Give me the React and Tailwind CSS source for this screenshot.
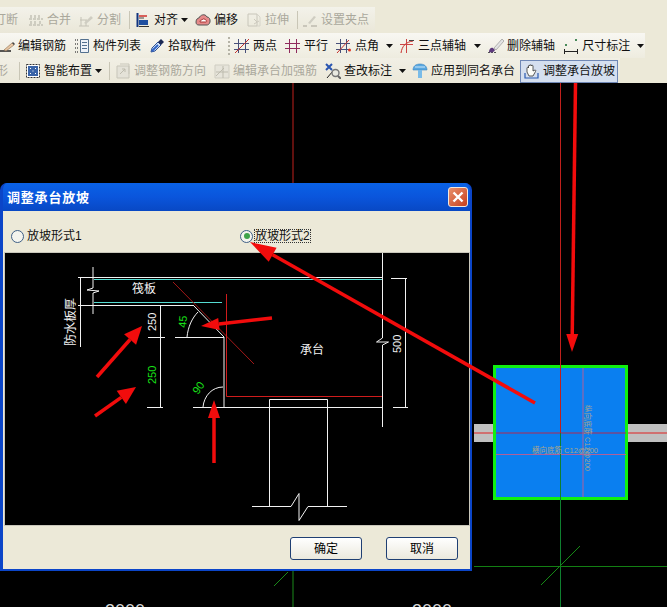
const Svg = ({ children, w = 16, h = 16 }) => (
  <svg width={w} height={h} viewBox="0 0 16 16" fill="none" className="shrink-0">{children}</svg>
);

const icons = {
  merge: <Svg><path d="M1 13h14M1 7h14M3 3v4M7 3v4M11 3v4M3 9v4M7 9v4M12 9v4" stroke="#c4c2b6" strokeWidth="1.5" strokeDasharray="3 1" /></Svg>,
  split: <Svg><path d="M1 14h10M2 8h7M3 5v9M8 8v6" stroke="#c4c2b6" /><path d="M6 11l7-7 2 2-7 6z" fill="#cfcdc2" /></Svg>,
  align: <Svg><path d="M2.500 1v14" stroke="#12357f" strokeWidth="2" /><path d="M4 8h9v5H4z" fill="#1f4fa0" /><path d="M4 4h8" stroke="#d0302c" strokeWidth="1.5" /><path d="M4 6h5" stroke="#444" /><path d="M4 14.500h10" stroke="#333" /></Svg>,
  offset: <Svg><path d="M1 10c0-3 2-4 3-4 1-3 6-5 8-1 2 0 3.500 2 3 5-.5 2-2 3-3 3H4c-2 0-3-1-3-3z" fill="#e58a8a" stroke="#555" /><path d="M5 10c0-2 1-2 2-2 .5-1.500 3-1.500 3.500 0 1.500 0 1.500 2 .5 2z" fill="#fff" stroke="#a33" /></Svg>,
  stretch: <Svg><path d="M2 2h9v12H2z" stroke="#c8c6ba" /><path d="M8 7l3 3M8 12l5-3" stroke="#ccc9bd" /><path d="M11 2l3 3v9h-3" stroke="#d6d4c9" /></Svg>,
  grip: <Svg><path d="M1 14h4M9 14h6" stroke="#bdbbae" strokeWidth="1.5" /><path d="M6 11l6-7 2 1-6 7z" fill="#cfcdc2" /></Svg>,
  pencil: <Svg><path d="M0 13h12" stroke="#222" strokeWidth="1.5" /><path d="M5 12l8-7 2 2-8 6z" fill="#e9c7a4" stroke="#8a6a4a" strokeWidth=".6" /><path d="M13 5l1-1 2 2-1 1z" fill="#444" /></Svg>,
  list: <Svg><path d="M1 2h3M1 6h3M1 10h3M1 14h3" stroke="#555" strokeWidth="1.5" strokeDasharray="1 1" /><path d="M6.500 1.500h8v13h-8z" fill="#eef2f8" stroke="#53708f" /><path d="M8 4.500h5M8 7.500h5M8 10.500h5" stroke="#53708f" /></Svg>,
  dropper: <Svg><path d="M2 14l1-4 6-6 3 3-6 6z" fill="#cfe0f6" stroke="#2b4f96" /><path d="M3 13l6-6" stroke="#2f62c4" strokeWidth="2" /><path d="M9 4l3-3 3 3-3 3z" fill="#1c2a55" /></Svg>,
  twoPoint: <Svg><path d="M4.500 1v14M11.500 1v14M0 5.500h15M0 11.500h15" stroke="#48507a" /><path d="M1 15L15 1" stroke="#c5322e" /></Svg>,
  parallel: <Svg><path d="M4.500 1v14M11.500 1v14M0 5.500h15M0 10.500h15" stroke="#8f2a5c" /></Svg>,
  pointAngle: <Svg><path d="M4.500 1v14M10.500 1v14M0 5.500h14M0 11.500h14" stroke="#48507a" /><path d="M1 15L13 2" stroke="#c5322e" /><circle cx="13.500" cy="12" r="1.500" fill="#d32" /></Svg>,
  threePoint: <Svg><path d="M2 15C3 8 7 4 14 3" stroke="#c9302c" /><path d="M7.500 1v14M1 6.500h13" stroke="#c44" /><path d="M10 2.500h5" stroke="#444" /></Svg>,
  brush: <Svg><path d="M0 14.500h8" stroke="#555" strokeDasharray="2 1" /><path d="M1 14c0-3 2-5 4-4l2 2c-1 2-3 3-6 2z" fill="#5d3a7c" /><path d="M6 10l8-9 2 2-8 9z" fill="#e3e3e3" stroke="#8a8a8a" strokeWidth=".6" /></Svg>,
  dim: <Svg><path d="M1.500 11v5M14.500 11v5M1 13.500h14" stroke="#222" /><rect x="2" y="6" width="2" height="2" fill="#4a8a5a" /><rect x="12" y="1" width="2" height="2" fill="#4a8a5a" /></Svg>,
  smart: <Svg><path d="M1.500 1.500h13v13h-13z" fill="#fff" stroke="#333" strokeDasharray="2 1" /><path d="M3 3h10v10H3z" fill="#3a64a8" /><path d="M5 5h1v1H5zM10 5h1v1h-1zM5 10h1v1H5zM10 10h1v1h-1zM7.500 7.500h1v1h-1z" fill="#fff" /></Svg>,
  adjust: <Svg><path d="M2 3h12v12H2z" fill="#e4e2d8" stroke="#c7c5b9" /><path d="M5 1h9v10" stroke="#c9c7bb" /><path d="M5 11l5-5M7 6h3v3" stroke="#bdbbae" /></Svg>,
  editCap: <Svg><path d="M1 2h14v13H1z" fill="#e6e4da" stroke="#cfcdc2" /><path d="M2 13l8-8M9 3v12M2 9h12" stroke="#bdbbae" /></Svg>,
  check: <Svg><path d="M1 1l6 6M1 7l6-6" stroke="#2a55b0" strokeWidth="2" /><path d="M2 15l6-7" stroke="#222" /><circle cx="10.500" cy="10" r="3.500" fill="#e9e9e0" stroke="#777" strokeWidth="1.400" /><path d="M13 13l3 3" stroke="#666" strokeWidth="2" /></Svg>,
  apply: <Svg><path d="M1 7c0-4 3-6 7-6s7 2 7 6z" fill="#5aa8e0" stroke="#3c84c0" strokeWidth=".6" /><path d="M6 7h4v8H6z" fill="#79bbe8" /><path d="M3 4h10" stroke="#cfe8f8" /></Svg>,
  hand: <Svg><path d="M3 9V5c0-1 1.500-1 1.500 0V3c0-1 1.500-1 1.500 0v-.5c0-1 1.500-1 1.500 0V3c0-1 1.500-1 1.500 0v5l2-1c1 0 1 1 .5 1.500L9 13H5z" fill="#fdfdf8" stroke="#333" strokeWidth=".8" /><path d="M1 10v5h13v-5" stroke="#2a5ab0" strokeWidth="1.200" /></Svg>,
};

const Caret = ({ className = "" }) => (
  <svg width="7" height="4" viewBox="0 0 7 4" className={`shrink-0 ${className}`}><path d="M0 0h7L3.500 4z" fill="#111" /></svg>
);
const Sep = ({ className = "" }) => <div className={`h-[18px] w-px shrink-0 bg-[#c9c6b6] ${className}`} />;

const Item = ({ icon, label, disabled, className = "" }) => (
  <div className={`flex shrink-0 items-center gap-[3px] ${className}`}>
    {icon && icons[icon]}
    <span className={`whitespace-nowrap pr-px text-[12px] leading-none ${disabled ? "text-[#aaa89c]" : "text-[#111]"}`}>{label}</span>
  </div>
);

const Toolbar = () => (
  <div className="h-[83px] shrink-0 overflow-hidden bg-[#ece9d8]">
    <div className="mt-[7px] flex h-[26px] w-[375px] items-center bg-linear-to-b from-[#f3f2ea] to-[#eae7d8]">
      <Item label="打断" disabled className="ml-[-6px]" />
      <Item icon="merge" label="合并" disabled className="ml-[9px]" />
      <Item icon="split" label="分割" disabled className="ml-[6px]" />
      <Sep className="ml-[7px]" />
      <Item icon="align" label="对齐" className="ml-[5px]" />
      <Caret className="ml-[2px]" />
      <Item icon="offset" label="偏移" className="ml-[7px]" />
      <Item icon="stretch" label="拉伸" disabled className="ml-[7px]" />
      <Sep className="ml-[7px]" />
      <Item icon="grip" label="设置夹点" disabled className="ml-[4px]" />
    </div>
    <div className="flex h-[25px] w-[645px] items-center bg-linear-to-b from-[#f8f7f2] to-[#eeecdf]">
      <Item icon="pencil" label="编辑钢筋" className="ml-[-1px]" />
      <Item icon="list" label="构件列表" className="ml-[7px]" />
      <Item icon="dropper" label="拾取构件" className="ml-[7px]" />
      <div className="ml-[11px] h-[18px] w-[2px] shrink-0 border-l-2 border-dotted border-[#b5b3a6]" />
      <Item icon="twoPoint" label="两点" className="ml-[4px]" />
      <Item icon="parallel" label="平行" className="ml-[7px]" />
      <Item icon="pointAngle" label="点角" className="ml-[7px]" />
      <Caret className="ml-[6px]" />
      <Item icon="threePoint" label="三点辅轴" className="ml-[6px]" />
      <Caret className="ml-[7px]" />
      <Item icon="brush" label="删除辅轴" className="ml-[7px]" />
      <Item icon="dim" label="尺寸标注" className="ml-[7px]" />
      <Caret className="ml-[6px]" />
    </div>
    <div className="flex h-[25px] w-[620px] items-center bg-linear-to-b from-[#f1efe5] to-[#ebe8d9] pt-px">
      <Item label="形" disabled className="ml-[-4px]" />
      <Sep className="ml-[10px]" />
      <Item icon="smart" label="智能布置" className="ml-[5px]" />
      <Caret className="ml-[2px]" />
      <Sep className="ml-[7px]" />
      <Item icon="adjust" label="调整钢筋方向" disabled className="ml-[5px]" />
      <Item icon="editCap" label="编辑承台加强筋" disabled className="ml-[7px]" />
      <Item icon="check" label="查改标注" className="ml-[7px]" />
      <Caret className="ml-[6px]" />
      <Item icon="apply" label="应用到同名承台" className="ml-[6px]" />
      <div className="ml-[4px] flex h-[23px] w-[98px] shrink-0 items-center gap-[3px] border border-[#6f87b5] bg-[#d5dfef] pl-[3px]">
        {icons.hand}
        <span className="whitespace-nowrap text-[12px] leading-none text-[#111]">调整承台放坡</span>
      </div>
    </div>
  </div>
);

const CanvasArt = () => (
  <svg width="667" height="524" viewBox="0 83 667 524" className="absolute left-0 top-0">
    <path d="M293 83v110" stroke="#c0201c" />
    <path d="M293 560v47" stroke="#1a8a1a" />
    <path d="M288 572l-14 14" stroke="#1a8a1a" />
    <rect x="474" y="424" width="193" height="18" fill="#c0c0c0" />
    <path d="M474 433h193" stroke="#e02020" />
    <rect x="494.500" y="366.500" width="132" height="132" fill="#0a7ff0" stroke="#10f010" strokeWidth="3" />
    <path d="M496 433h130" stroke="#b02a50" />
    <path d="M496 454.500h130M583 368v129" stroke="#b0609a" />
    <path d="M560.500 83v350" stroke="#c0201c" />
    <path d="M560.500 433v174" stroke="#0f7f2f" />
    <path d="M474 566.500h193" stroke="#137f13" />
    <path d="M541 585l39-39" stroke="#158a15" />
    <text x="532" y="453" fontSize="7.5" fill="#a9a48c">横向底筋 C12@200</text>
    <text x="585" y="405" fontSize="7.5" fill="#a9a48c" transform="rotate(90 585 405)">纵向底筋 C12@200</text>
    <text x="105" y="617" fontSize="18" fill="#d8d8d8">3000</text>
    <text x="412" y="617" fontSize="18" fill="#d8d8d8">3000</text>
  </svg>
);

const W = "#f2f2f2";
const Diagram = () => (
  <svg width="464" height="272" viewBox="5 254 464 272" className="block bg-black">
    <g stroke={W} fill="none">
      <path d="M93 278.500h290M93 306.500h100M93 268v21l-6 2 12 1-6 2v21" />
      <path d="M78 278.500h15M80.500 278v70M78 306.500h15" />
      <path d="M193 306l31 32v70M175 338.500h49M193 408.500h190" />
      <path d="M160.500 306v102M148 338.500h17M147 408.500h16" />
      <path d="M187 338c1-10 5-19 11-25M203 408c1-11 9-20 20-20" />
      <path d="M382.500 254v85l-6 4 12 0-6 3v82" />
      <path d="M405.500 279v129M391 279.500h16M393 408.500h15" />
      <path d="M269.500 507V400.500h58V507M252 507.500h39l8-13v27l9-14h39" />
    </g>
    <path d="M94 280.500h288M94 303.500h128" stroke="#55dcd2" />
    <path d="M173 283l81 82" stroke="#a31818" />
    <path d="M226.500 295v102.500H382" stroke="#d01c1c" fill="none" />
    <g fontSize="12" fill={W}>
      <text x="132" y="294">筏板</text>
      <text x="300" y="355">承台</text>
      <text x="75" y="347" transform="rotate(-90 75 347)">防水板厚</text>
    </g>
    <text x="156" y="332" fontSize="11" fill={W} transform="rotate(-90 156 332)">250</text>
    <text x="156" y="385" fontSize="11" fill="#18e018" transform="rotate(-90 156 385)">250</text>
    <text x="186" y="329" fontSize="11" fill="#18e018" transform="rotate(-85 186 329)">45</text>
    <text x="198" y="396" fontSize="11" fill="#18e018" transform="rotate(-55 198 396)">90</text>
    <text x="401" y="354" fontSize="11" fill={W} transform="rotate(-90 401 354)">500</text>
  </svg>
);

const Radio = ({ checked }) => (
  <span className="flex h-[13px] w-[13px] shrink-0 items-center justify-center rounded-full border border-[#3f5f86] bg-[#f4f4ee]">
    {checked && <span className="h-[6px] w-[6px] rounded-full bg-[#3fa34a]" />}
  </span>
);

const DlgButton = ({ children }) => (
  <button className="flex h-[23px] w-[72px] items-center justify-center rounded-[3px] border border-[#1f3f73] bg-linear-to-b from-white to-[#ebe9dd] text-[12px] leading-none text-black">
    {children}
  </button>
);

const Dialog = () => (
  <div className="absolute left-0 top-[100px] flex h-[388px] w-[472px] flex-col overflow-hidden rounded-t-[7px] border-b-2 border-l-[3px] border-r-2 border-[#0b45c8] bg-[#0b45c8]">
    <div className="flex h-[28px] shrink-0 items-center justify-between bg-linear-to-b from-[#0a62e6] via-[#0a55dc] to-[#0848c4] pl-[4px] pr-[2px]">
      <span className="text-[13px] font-bold leading-none tracking-[0.8px] text-white">调整承台放坡</span>
      <div className="flex h-[20px] w-[20px] items-center justify-center rounded-[3px] border border-[#f0e8e0] bg-linear-to-br from-[#e8906c] to-[#c63c18]">
        <svg width="12" height="12" viewBox="0 0 12 12"><path d="M1.500 1.500l9 9M10.500 1.500l-9 9" stroke="#fff" strokeWidth="2.400" /></svg>
      </div>
    </div>
    <div className="flex min-h-0 flex-1 flex-col bg-[#ece9d8]">
      <div className="flex h-[41px] shrink-0 items-center pl-[8px] pt-[9px] text-[12px] leading-none text-[#111]">
        <Radio />
        <span className="ml-[3px] w-[53px] whitespace-nowrap">放坡形式1</span>
        <span className="ml-[160px]"><Radio checked /></span>
        <span className="ml-px whitespace-nowrap border border-dotted border-[#333]">放坡形式2</span>
      </div>
      <div className="ml-px h-[274px] w-[466px] shrink-0 border border-[#c9c7bb]">
        <Diagram />
      </div>
      <div className="flex shrink-0 justify-end gap-[24px] pr-[12px] pt-[11px]">
        <DlgButton>确定</DlgButton>
        <DlgButton>取消</DlgButton>
      </div>
    </div>
  </div>
);

const Arrow = ({ from, tip, base, spread = 8 }) => {
  const dx = tip[0] - from[0];
  const dy = tip[1] - from[1];
  const len = Math.hypot(dx, dy);
  const ux = dx / len;
  const uy = dy / len;
  const bx = tip[0] - ux * base;
  const by = tip[1] - uy * base;
  const px = -uy * spread;
  const py = ux * spread;
  return (
    <g fill="#f20c0c" stroke="#f20c0c">
      <path d={`M${from[0]} ${from[1]}L${bx} ${by}`} strokeWidth="3.500" />
      <path d={`M${tip[0]} ${tip[1]}L${bx + px} ${by + py}L${bx - px} ${by - py}z`} strokeWidth="0" />
    </g>
  );
};

const Arrows = () => (
  <svg width="667" height="607" viewBox="0 0 667 607" className="pointer-events-none absolute left-0 top-0">
    <Arrow from={[535, 403]} tip={[250, 242]} base={26} />
    <Arrow from={[575.500, 83]} tip={[572, 352]} base={18} spread={6} />
    <Arrow from={[272, 318]} tip={[201, 326]} base={18} spread={6} />
    <Arrow from={[97, 377]} tip={[142, 326]} base={18} />
    <Arrow from={[95, 416]} tip={[136, 387]} base={18} />
    <Arrow from={[214, 463]} tip={[214, 400]} base={18} spread={6} />
  </svg>
);

export default function App() {
  return (
    <div className="relative flex h-[607px] w-[667px] flex-col overflow-hidden bg-black font-['Liberation_Sans','Noto_Sans_CJK_SC',sans-serif]">
      <Toolbar />
      <div className="relative flex-1">
        <CanvasArt />
        <Dialog />
      </div>
      <Arrows />
    </div>
  );
}
